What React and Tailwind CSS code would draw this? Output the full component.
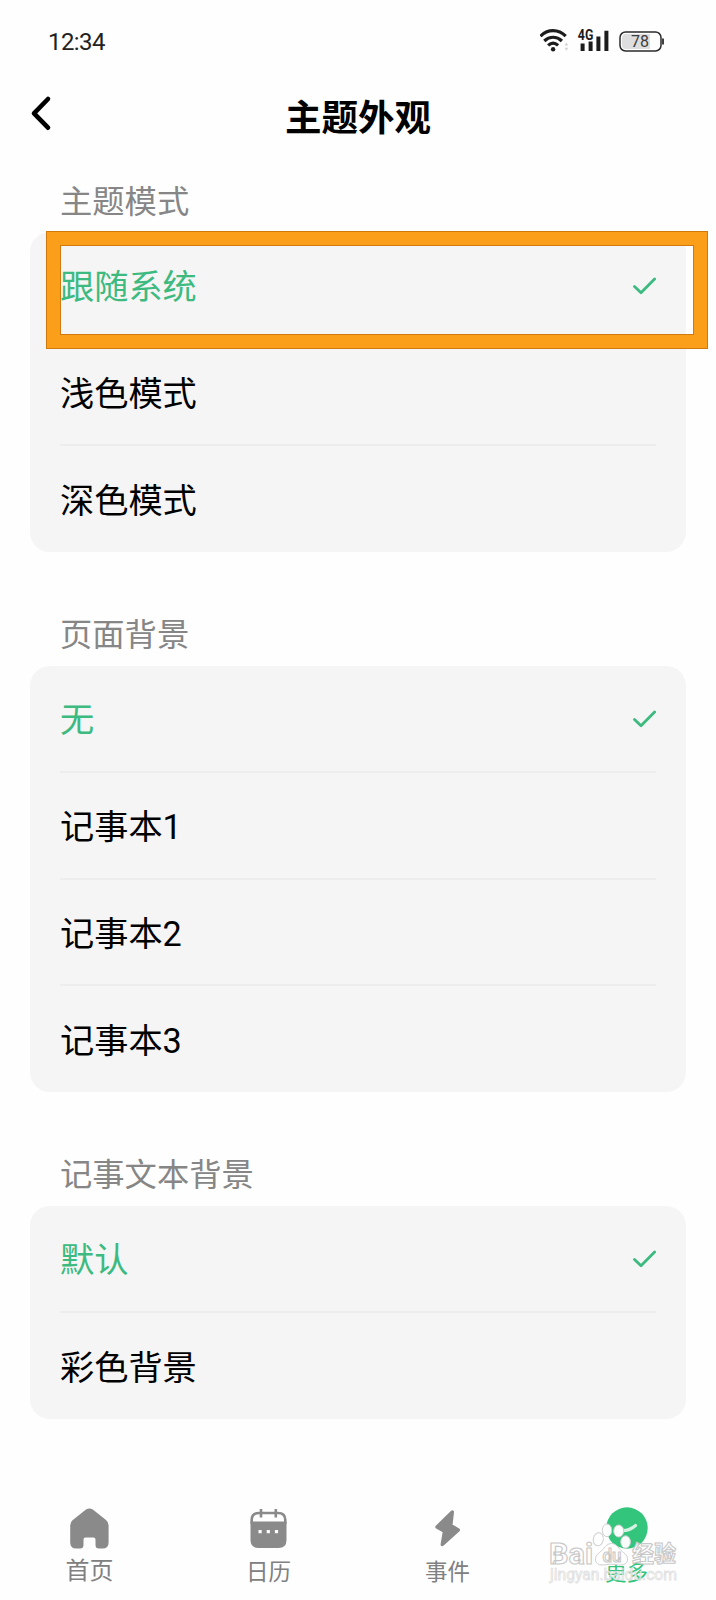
import React, { useState } from "react";

const sections = [
  { title: "主题模式", options: ["跟随系统", "浅色模式", "深色模式"] },
  { title: "页面背景", options: ["无", "记事本1", "记事本2", "记事本3"] },
  { title: "记事文本背景", options: ["默认", "彩色背景"] },
];

const StatusBar = () => (
  <div className="flex h-[82px] items-center justify-between pl-[48px] pr-[50px] pt-[2px] text-[#222]">
    <span className="text-[24px] leading-none tracking-[-0.6px]">12:34</span>
    <svg width="126" height="30" viewBox="0 0 126 30" fill="none">
      {/* wifi */}
      <g stroke="#1c1c1c" strokeWidth="3.2">
        <path d="M0.5 9.2C7.700 1.800 18.500 1.800 25.700 9.2" />
        <path d="M4.3 14C9.500 9 16.700 9 21.900 14" />
        <path d="M8.100 18.4C11.300 15.4 14.900 15.4 18.100 18.4" />
      </g>
      <circle cx="13.1" cy="22.2" r="2.2" fill="#1c1c1c" />
      <path d="M24.4 18.6l2-3 2 3zM24.4 20.8l2 3 2-3z" fill="#d4d4d4" />
      {/* signal */}
      <text x="37.8" y="12.8" fontSize="14.5" fontWeight="700" fill="#1c1c1c" textLength="15.5" lengthAdjust="spacingAndGlyphs">4G</text>
      <g stroke="#1c1c1c" strokeWidth="4">
        <path d="M42.600 16.500v7.500M50.600 14.500v9.500M58.400 9.500v14.500M66.400 3.800v20.200" />
      </g>
      {/* battery */}
      <rect x="80" y="5" width="41" height="19" rx="5.5" stroke="#2b2b2b" strokeWidth="1.5" />
      <path d="M86 7h24v15H86a4 4 0 0 1-4-4v-7a4 4 0 0 1 4-4z" fill="#dedede" />
      <path d="M123 11.5v6" stroke="#2b2b2b" strokeWidth="1.8" />
      <text x="91" y="20" fontSize="16" fill="#3c3c3c">78</text>
    </svg>
  </div>
);

const Header = () => (
  <header className="relative flex h-[70px] items-center justify-center pt-[4px]">
    <button className="absolute left-[29px] top-[13px]" aria-label="返回">
      <svg width="24" height="36" viewBox="0 0 24 36" fill="none" stroke="#000" strokeWidth="4.6" strokeLinecap="round" strokeLinejoin="round">
        <path d="M19 4L5 18.3L19 32.7" />
      </svg>
    </button>
    <h1 className="text-[36.5px] font-bold leading-none text-black">主题外观</h1>
  </header>
);

const Check = () => (
  <svg className="mt-[2px]" width="24" height="20" viewBox="0 0 24 20" fill="none" stroke="#3dba80" strokeWidth="2.8" strokeLinecap="round" strokeLinejoin="round">
    <path d="M2.5 10.5L9 16.7L22.6 3" />
  </svg>
);

const Section = ({ title, options, highlight }) => {
  const [selected, setSelected] = useState(options[0]);

  return (
    <section className="relative">
      <h2 className="flex h-[60px] items-center pl-[30px] text-[32.3px] leading-none text-[#868686]">{title}</h2>
      <ul className="rounded-[20px] bg-[#f5f5f5]">
        {options.map((option, i) => (
          <li key={option} onClick={() => setSelected(option)} className="group px-[30px]">
            <div
              className={`flex h-[106.5px] items-center justify-between text-[34.2px] leading-none group-first:h-[107.5px] group-last:h-[105.5px] ${
                i < options.length - 1 ? "border-b-2 border-[#ededed]" : ""
              } ${selected === option ? "text-[#3dba80]" : "text-black"}`}
            >
              <span className="pt-[4px]">{option}</span>
              {selected === option && <Check />}
            </div>
          </li>
        ))}
      </ul>
      {highlight && (
        <div className="pointer-events-none absolute -right-[22px] left-[16px] top-[59px] h-[118px] border border-[#d0790f]">
          <div className="h-full border-[13px] border-[#fb9f1b]">
            <div className="h-full border border-[#d0790f]" />
          </div>
        </div>
      )}
    </section>
  );
};

const HomeIcon = () => (
  <svg width="42" height="42" viewBox="0 0 42 42" fill="#8a8a8a">
    <path d="M17 2.6Q20.4 0.2 23.800 2.6L37 13Q39.600 15 39.600 18.400V35.500Q39.600 41.500 33.600 41.500H30Q26.500 41.500 26.500 38V32.500Q26.500 30.500 24.500 30.500H16.500Q14.500 30.500 14.500 32.500V38Q14.500 41.500 11 41.500H7.200Q1.200 41.500 1.200 35.500V18.400Q1.200 15 3.800 13Z" />
  </svg>
);

const CalendarIcon = () => (
  <svg width="42" height="42" viewBox="0 0 42 42">
    <path d="M2.5 14.500H38.5V33Q38.5 41 30.5 41H10.5Q2.5 41 2.5 33Z" fill="#8a8a8a" />
    <path d="M3.7 17V13Q3.7 6 11 6H30Q37.3 6 37.3 13V17M13 2V10.500M27.8 2V10.500" fill="none" stroke="#8a8a8a" strokeWidth="2.6" />
    <path d="M10.5 23h3.2v3.2h-3.2zM18.7 23h3.2v3.2h-3.2zM26.9 23h3.2v3.2h-3.2z" fill="#fff" />
  </svg>
);

const BoltIcon = () => (
  <svg width="42" height="42" viewBox="0 0 42 42" fill="#8a8a8a" stroke="#8a8a8a" strokeWidth="3.4" strokeLinejoin="round">
    <path d="M25.3 5L10 20L17.5 24.4L15.3 37.500L31.3 23L23.8 18.500Z" />
  </svg>
);

const MoreIcon = () => (
  <svg width="42" height="42" viewBox="0 0 42 42" fill="none">
    <circle cx="21" cy="21" r="20.7" fill="#32c57b" />
    <path d="M14 23.5Q23 24.5 29.5 18.5" stroke="#d3f2e1" strokeWidth="3.2" strokeLinecap="round" />
  </svg>
);

const tabs = [
  { label: "首页", Icon: HomeIcon, style: "text-[24px] text-[#808080] h-[28px]" },
  { label: "日历", Icon: CalendarIcon, style: "text-[22.5px] text-[#808080] h-[30px]" },
  { label: "事件", Icon: BoltIcon, style: "text-[22.5px] text-[#808080] h-[30px]" },
  { label: "更多", Icon: MoreIcon, style: "text-[21.5px] text-[#32c57b] h-[31px]" },
];

const Watermark = () => (
  <svg className="pointer-events-none absolute bottom-0 right-[30px]" width="140" height="96" viewBox="0 0 140 96">
    <text x="4" y="75.5" fontSize="16" fill="#fff" fillOpacity="0.8" stroke="#c8c8c8" strokeOpacity="0.55" strokeWidth="0.9" textLength="127" lengthAdjust="spacingAndGlyphs">jingyan.baidu.com</text>
    <g fill="#fff" fillOpacity="0.97" stroke="#cfcfcf" strokeWidth="1">
      <ellipse cx="61" cy="26.3" rx="4.7" ry="6.4" />
      <ellipse cx="72.7" cy="27" rx="5" ry="6" />
      <ellipse cx="52.3" cy="35.3" rx="5" ry="6.6" transform="rotate(10 52.3 35.3)" />
      <ellipse cx="79.6" cy="38" rx="4.8" ry="6.2" />
      <path d="M65.5 39.5C71 39.5 72.5 45 77.5 48.5C84 53 82.5 61 75 61C71 61 69 60.2 65.5 60.2C62 60.2 60 61 56 61C48.5 61 47 53 53.5 48.5C58.5 45 60 39.5 65.5 39.5Z" />
    </g>
    <g fill="#fff" fillOpacity="0.85" stroke="#c8c8c8" strokeWidth="1.1" fontWeight="700">
      <text x="3" y="59.5" fontSize="30" textLength="44" lengthAdjust="spacingAndGlyphs">Bai</text>
      <text x="56.5" y="58" fontSize="18" fontWeight="500" textLength="19" lengthAdjust="spacingAndGlyphs">du</text>
      <text x="86" y="58" fontSize="22.5" textLength="44" lengthAdjust="spacingAndGlyphs">经验</text>
    </g>
  </svg>
);

const TabBar = () => (
  <nav className="relative mt-auto grid h-[93px] grid-cols-4">
    {tabs.map(({ label, Icon, style }) => (
      <button key={label} className="flex flex-col items-center">
        <Icon />
        <span className={`mt-[8px] flex items-center leading-none ${style}`}>{label}</span>
      </button>
    ))}
    <Watermark />
  </nav>
);

export default function App() {
  return (
    <div className="flex h-[1600px] w-[716px] flex-col overflow-hidden bg-[#fefefe] font-[Roboto,'Noto_Sans_CJK_SC',sans-serif]">
      <StatusBar />
      <Header />
      <main className="mt-[20px] flex flex-col gap-[54px] px-[30px]">
        {sections.map((section, i) => (
          <Section key={section.title} {...section} highlight={i === 0} />
        ))}
      </main>
      <TabBar />
    </div>
  );
}
